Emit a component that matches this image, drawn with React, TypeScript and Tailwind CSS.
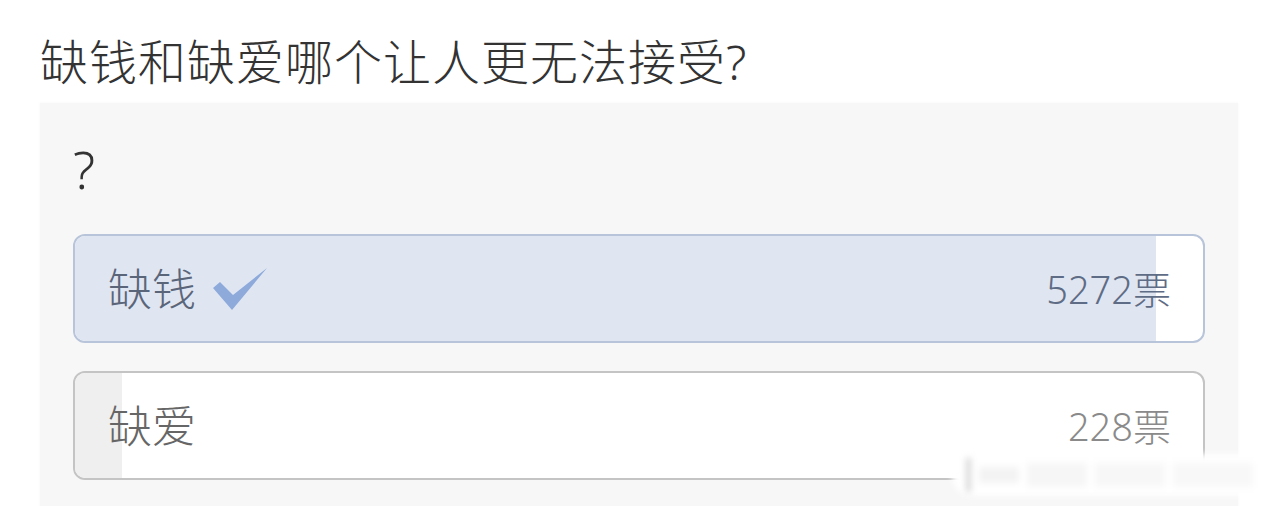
const poll = {
  title: "缺钱和缺爱哪个让人更无法接受?",
  desc: "?",
  options: [
    { label: "缺钱", votes: 5272, chosen: true },
    { label: "缺爱", votes: 228, chosen: false },
  ],
};

const total = poll.options.reduce((s, o) => s + o.votes, 0);

function Check() {
  return (
    <svg width="54" height="42" viewBox="0 0 54 42" className="ml-[17px]">
      <path d="M0 20 L7 14 L20 27 L54 0 L19 42 Z" fill="#8eaadb" />
    </svg>
  );
}

export default function App() {
  return (
    <div
      className="relative h-[506px] w-[1280px] overflow-hidden bg-white"
      style={{ fontFamily: '"Noto Sans", "Noto Sans CJK SC", sans-serif' }}
    >
      <h1 className="pl-[40px] pt-[33px] text-[48px] leading-[58px] font-light tracking-[1px] text-[#333]">
        {poll.title}
      </h1>

      <div className="mt-[12px] mr-[42px] ml-[40px] h-[420px] bg-[#f7f7f7] px-[33px] pt-[34px] shadow-[0_0_3px_rgba(0,0,0,0.04)]">
        <p className="text-[52px] leading-[64px] font-light text-[#333]">{poll.desc}</p>

        <ul className="mt-[33px] flex flex-col gap-[28px]">
          {poll.options.map((o, i) => {
            const pct = (o.votes / total) * 100;
            return (
              <li
                key={i}
                className={
                  o.chosen
                    ? "relative h-[109px] overflow-hidden rounded-[12px] border-2 border-[#b7c4d9] bg-white"
                    : "relative h-[109px] overflow-hidden rounded-[12px] border-2 border-[#c4c4c4] bg-white"
                }
              >
                <div
                  className={o.chosen ? "absolute inset-y-0 left-0 bg-[#dfe6f2]" : "absolute inset-y-0 left-0 bg-[#efefef]"}
                  style={{ width: `${pct}%` }}
                />
                <div className="relative flex h-full items-center justify-between pr-[32px] pl-[33px]">
                  <div className="flex items-center">
                    <span
                      className={
                        o.chosen
                          ? "text-[44px] leading-none font-light text-[#5b6579]"
                          : "text-[44px] leading-none font-light text-[#666]"
                      }
                    >
                      {o.label}
                    </span>
                    {o.chosen && <Check />}
                  </div>
                  <span
                    className={
                      o.chosen
                        ? "text-[38px] leading-none font-light text-[#5f6c85]"
                        : "text-[38px] leading-none font-light text-[#8a8a8a]"
                    }
                  >
                    {o.votes}票
                  </span>
                </div>
              </li>
            );
          })}
        </ul>
      </div>

      {/* faded watermark strip */}
      <div className="absolute top-[454px] left-[952px] flex h-[42px] w-[320px] items-center gap-[8px] rounded-l-[20px] bg-white px-[14px] blur-[3px]">
        <div className="h-[34px] w-[5px] bg-[#d6d6d6]" />
        <div className="h-[16px] w-[40px] bg-[#f3f3f3]" />
        <div className="h-[24px] w-[60px] bg-[#f6f6f6]" />
        <div className="h-[24px] w-[70px] bg-[#f7f7f7]" />
        <div className="h-[24px] w-[80px] bg-[#f8f8f8]" />
      </div>
    </div>
  );
}
